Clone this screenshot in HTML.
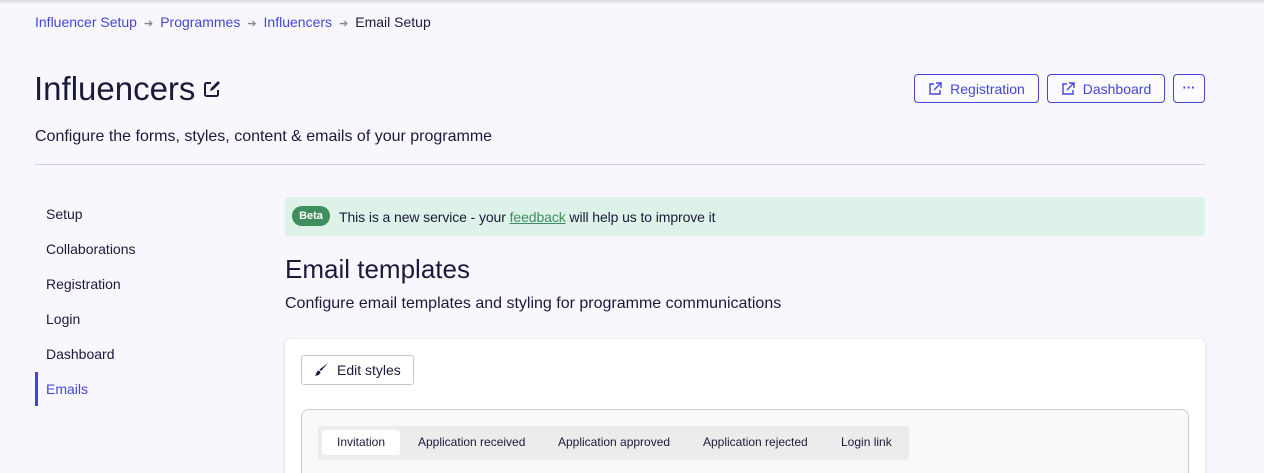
<!DOCTYPE html>
<html><head><style>
*{box-sizing:border-box;margin:0;padding:0}
html,body{width:1264px;height:473px;overflow:hidden}
body{background:#f8f7fd;font-family:"Liberation Sans",sans-serif;color:#1c1a3a;position:relative}
.a{position:absolute;white-space:nowrap}
.topsh{position:absolute;left:0;top:0;width:1264px;height:4px;background:linear-gradient(#d8d8dc,#f8f7fd)}
.bc{font-size:14px;top:14px;left:35px}
.bc a{color:#4446d8;text-decoration:none}
.bc .ar{color:#888;font-size:11px;margin:0 7px}
.btn{position:absolute;top:74px;height:29px;border:1px solid #4446d8;border-radius:4px;color:#4446d8;font-size:14px;display:flex;align-items:center;justify-content:center;gap:8px;background:#fbfbff}
.nav{left:46px;font-size:14px;color:#1c1a3a}
.tab{position:absolute;top:430px;height:25px;font-size:12px;line-height:25px}
</style></head><body>
<div class="topsh"></div>
<div class="a bc"><a>Influencer Setup</a><span class="ar">➔</span><a>Programmes</a><span class="ar">➔</span><a>Influencers</a><span class="ar">➔</span><span>Email Setup</span></div>
<div class="a" style="left:34px;top:70px;font-size:33px;color:#1c1a3a">Influencers</div>
<svg class="a" style="left:203px;top:80px" width="18" height="18" viewBox="0 0 18 18"><path d="M8 3H3.5A1.5 1.5 0 0 0 2 4.5v10A1.5 1.5 0 0 0 3.5 16h10a1.5 1.5 0 0 0 1.5-1.5V10" fill="none" stroke="#1c1a3a" stroke-width="2"/><path d="M7 11l1-3 7-7 2 2-7 7z" fill="#1c1a3a"/></svg>
<div class="a" style="left:35px;top:128px;font-size:16px">Configure the forms, styles, content &amp; emails of your programme</div>
<div class="btn" style="left:914px;width:125px"><svg width="14" height="14" viewBox="0 0 14 14" fill="none" stroke="#4446d8" stroke-width="1.4"><path d="M6 2H2v10h10V8M8 1h5v5M13 1L6 8"/></svg>Registration</div>
<div class="btn" style="left:1047px;width:118px"><svg width="14" height="14" viewBox="0 0 14 14" fill="none" stroke="#4446d8" stroke-width="1.4"><path d="M6 2H2v10h10V8M8 1h5v5M13 1L6 8"/></svg>Dashboard</div>
<div class="btn" style="left:1173px;width:32px;font-weight:bold;font-size:13px;padding-bottom:2px">···</div>
<div class="a" style="left:35px;top:164px;width:1170px;height:1px;background:#cfcdd6"></div>
<div class="a nav" style="top:206px">Setup</div>
<div class="a nav" style="top:241px">Collaborations</div>
<div class="a nav" style="top:276px">Registration</div>
<div class="a nav" style="top:311px">Login</div>
<div class="a nav" style="top:346px">Dashboard</div>
<div class="a nav" style="top:381px;color:#4446d8">Emails</div>
<div class="a" style="left:35px;top:372px;width:3px;height:34px;background:#4446d8"></div>
<div class="a" style="left:285px;top:197px;width:920px;height:39px;background:#ddf2e8;border-radius:3px"></div>
<div class="a" style="left:292px;top:206px;width:38px;height:20px;background:#3e8e5e;border-radius:10px;color:#fff;font-size:11px;font-weight:bold;text-align:center;line-height:20px">Beta</div>
<div class="a" style="left:339px;top:209px;font-size:14px;letter-spacing:-0.1px">This is a new service - your <span style="color:#3e8e5e;text-decoration:underline">feedback</span> will help us to improve it</div>
<div class="a" style="left:285px;top:254px;font-size:26px">Email templates</div>
<div class="a" style="left:285px;top:295px;font-size:16px">Configure email templates and styling for programme communications</div>
<div class="a" style="left:285px;top:339px;width:920px;height:150px;background:#fff;border-radius:6px;box-shadow:0 1px 4px rgba(0,0,0,.15)"></div>
<div class="a" style="left:301px;top:355px;width:113px;height:30px;border:1px solid #c8c8cc;border-radius:3px;background:#fff;font-size:14px;line-height:28px;padding-left:35px">Edit styles</div>
<svg class="a" style="left:314px;top:362px" width="15" height="15" viewBox="0 0 15 15"><path d="M14 1L7 9l-1.5-1.5z" fill="#1c1a3a"/><path d="M5 8.5L6.5 10C6 13 3 14 1 13.5 2.5 12.5 2 9 5 8.5z" fill="#1c1a3a"/></svg>
<div class="a" style="left:301px;top:409px;width:888px;height:80px;border:1px solid #cccccc;border-radius:8px;background:#f9f9f9"></div>
<div class="a" style="left:318px;top:426px;width:591px;height:34px;background:#ececec;border-radius:3px"></div>
<div class="tab" style="left:322px;width:78px;background:#fff;border-radius:3px;text-align:center">Invitation</div>
<div class="tab" style="left:418px">Application received</div>
<div class="tab" style="left:558px">Application approved</div>
<div class="tab" style="left:703px">Application rejected</div>
<div class="tab" style="left:841px">Login link</div>
</body></html>
